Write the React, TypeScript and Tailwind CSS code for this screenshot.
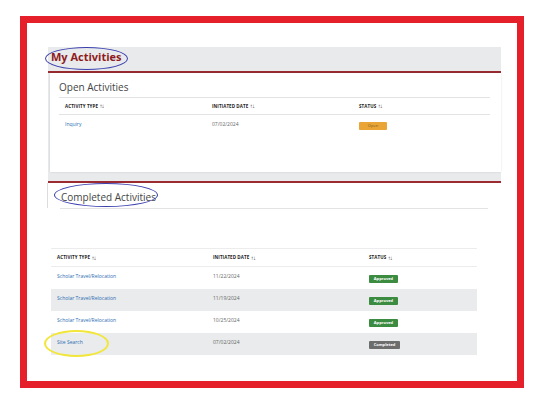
import React from 'react';

type Row = { type: string; date: string; status: 'Approved' | 'Completed' | 'Open' };

const completed: Row[] = [
  { type: 'Scholar Travel/Relocation', date: '11/22/2024', status: 'Approved' },
  { type: 'Scholar Travel/Relocation', date: '11/19/2024', status: 'Approved' },
  { type: 'Scholar Travel/Relocation', date: '10/25/2024', status: 'Approved' },
  { type: 'Site Search', date: '07/02/2024', status: 'Completed' },
];

function Badge({ status }: { status: Row['status'] }) {
  const tone =
    status === 'Approved'
      ? 'bg-[#3b8b40] text-white font-bold w-[29px]'
      : status === 'Completed'
        ? 'bg-[#6d6d6d] text-white font-bold w-[31px]'
        : 'bg-[#eaa537] text-[#7a5a20] w-[28px]';
  return (
    <span className={`flex h-[8px] items-center justify-center rounded-[1px] text-[4px] leading-none ${tone}`}>
      {status}
    </span>
  );
}

function SortHead({ label }: { label: string }) {
  return (
    <span className="flex items-center gap-[1.5px] text-[4.5px] font-bold uppercase leading-none tracking-[0.02em] text-[#222]">
      {label}
      <span className="text-[6px] font-normal tracking-[-0.15em] text-[#333]">↑↓</span>
    </span>
  );
}

export default function App() {
  return (
    <div
      className="relative h-[403px] w-[555px] overflow-hidden bg-white pl-[20px] pt-[16px]"
      style={{ fontFamily: '"Open Sans", "Noto Sans", sans-serif' }}
    >
      <div className="h-[372px] w-[504px] border-[7px] border-[#e5202a] pl-[21px] pt-[24px]">
        <div className="w-[453px]">
          {/* My Activities header */}
          <div className="h-[24px] bg-[#e8eaeb] pl-[3px] pt-[3px]">
            <h1 className="text-[11px] font-bold leading-[13px] text-[#8e1b20]">My Activities</h1>
          </div>
          <div className="h-[2px] bg-[#9b2b30]" />

          {/* Open activities card */}
          <div className="bg-[#e8eaeb] pb-[9px] pl-[2px]">
            <div className="h-[99px] bg-white pl-[9px] pr-[11px] pt-[7px] shadow-[0_0_2px_rgba(0,0,0,0.12)]">
              <h2 className="mb-[3px] text-[10px] leading-[14px] text-[#444]">Open Activities</h2>
              <div className="flex h-[18px] items-center border-y border-[#e3e3e3]">
                <div className="w-[153px] pl-[6px]"><SortHead label="Activity Type" /></div>
                <div className="w-[147px]"><SortHead label="Initiated Date" /></div>
                <div className="flex-1"><SortHead label="Status" /></div>
              </div>
              <div className="flex items-start pt-[6px]">
                <div className="w-[153px] pl-[6px] text-[5px] leading-[7px] text-[#2c6db3]">Inquiry</div>
                <div className="w-[147px] text-[5px] leading-[7px] text-[#666]">07/02/2024</div>
                <div className="flex flex-1 pt-[1px]"><Badge status="Open" /></div>
              </div>
            </div>
          </div>
          <div className="h-[2px] bg-[#9b2b30]" />

          {/* Completed activities */}
          <div className="ml-[-1px] h-[25px] border-l border-[#dcdcdc] pl-[13px] pt-[7px]">
            <h2 className="text-[10px] leading-[14px] text-[#444]">Completed Activities</h2>
          </div>
          <div className="ml-[12px] h-px w-[428px] bg-[#e3e3e3]" />

          <div className="ml-[3px] mt-[39px] w-[426px] text-[5px]">
            <div className="flex h-[19px] items-center border-y border-[#ececec]">
              <div className="w-[162px] pl-[6px]"><SortHead label="Activity Type" /></div>
              <div className="w-[156px]"><SortHead label="Initiated Date" /></div>
              <div className="flex-1"><SortHead label="Status" /></div>
            </div>
            {completed.map((r, i) => (
              <div
                key={i}
                className={`flex h-[22px] items-start pt-[6px] ${i % 2 === 1 ? 'bg-[#e9ebec]' : 'bg-white'}`}
              >
                <div className="w-[162px] pl-[6px] leading-[7px] text-[#2c6db3]">{r.type}</div>
                <div className="w-[156px] leading-[7px] text-[#666]">{r.date}</div>
                <div className="flex flex-1 pt-[2px]"><Badge status={r.status} /></div>
              </div>
            ))}
          </div>
        </div>
      </div>

      {/* annotation circles */}
      <div className="absolute left-[45px] top-[47px] h-[23px] w-[83px] rounded-[50%] border-[1.5px] border-[#3a3fae]" />
      <div className="absolute left-[54px] top-[183px] h-[24px] w-[104px] rounded-[50%] border-[1.5px] border-[#3a3fae]" />
      <div className="absolute left-[44px] top-[330px] h-[27px] w-[65px] rounded-[50%] border-2 border-[#f2e63a]" />
    </div>
  );
}
